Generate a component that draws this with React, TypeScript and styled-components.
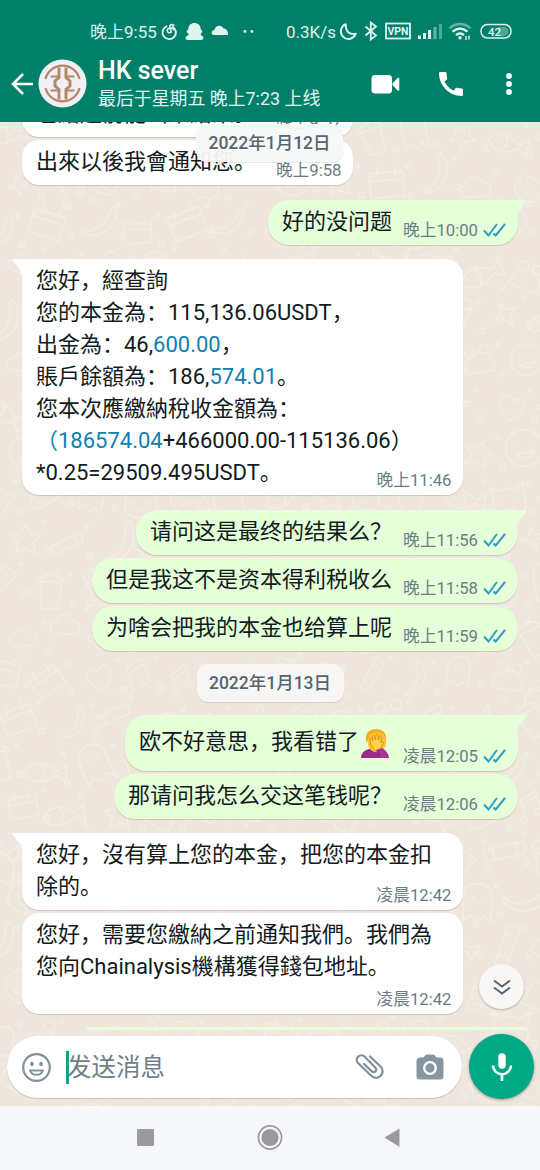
import React from 'react';
import styled, { createGlobalStyle } from 'styled-components';
import { MdCall } from 'react-icons/md';

const Global = createGlobalStyle`
  * { box-sizing: border-box; }
  body {
    margin: 0;
    font-family: Roboto, "Noto Sans CJK SC", sans-serif;
    background: #f6f7f9;
  }
  svg { display: block; flex: none; }
`;

const Screen = styled.div`
  width: 540px;
  height: 1170px;
  display: flex;
  flex-direction: column;
  overflow: hidden;
`;

const Header = styled.header`
  height: 122px;
  flex: none;
  background: #008069;
  color: #fff;
`;

const StatusBar = styled.div`
  height: 45px;
  padding: 17px 0 0 90px;
  display: flex;
  align-items: center;
  font-size: 17px;
  color: #dff3ef;
  white-space: nowrap;
`;

const StatusText = styled.span<{ $w: number }>`
  width: ${(p) => p.$w}px;
  line-height: 28px;
  padding-top: 1px;
`;

const AppBar = styled.div`
  height: 77px;
  padding-left: 10px;
  display: flex;
  align-items: center;
`;

const Titles = styled.div`
  width: 284px;
  padding: 3px 0 0 11px;
  white-space: nowrap;
`;

const Name = styled.div`
  font-size: 25px;
  font-weight: 500;
  line-height: 28px;
`;

const Seen = styled.div`
  font-size: 17.9px;
  line-height: 28px;
  color: #e0f3ef;
`;

const Chat = styled.main`
  position: relative;
  height: 984px;
  flex: none;
  overflow: hidden;
  background: #efe7de;
`;

const Backdrop = styled.svg`
  position: absolute;
  inset: 0;
`;

const List = styled.div`
  position: relative;
  height: 908px;
  overflow: hidden;
  display: flex;
  flex-direction: column;
  justify-content: flex-end;
  padding: 0 22px;
`;

const Bubble = styled.div<{ $out?: boolean; $w: number; $h: number; $top: number }>`
  position: relative;
  flex: none;
  width: ${(p) => p.$w}px;
  height: ${(p) => p.$h}px;
  margin-top: ${(p) => p.$top}px;
  padding: 6px ${(p) => (p.$out ? 12 : 11.5)}px 4px 14px;
  align-self: ${(p) => (p.$out ? 'flex-end' : 'flex-start')};
  background: ${(p) => (p.$out ? '#e5ffd9' : '#fff')};
  border-radius: ${(p) => (p.$out ? 21 : 17)}px;
  box-shadow: 0 1px 1px rgba(90, 70, 50, 0.22);
  display: flex;
  justify-content: space-between;
  align-items: flex-end;
`;

const Tail = styled.svg<{ $out?: boolean }>`
  position: absolute;
  top: 0;
  ${(p) => (p.$out ? 'right: -9px;' : 'left: -10px; transform: scaleX(-1);')}
`;

const Body = styled.div`
  align-self: flex-start;
  flex: none;
  font-size: 22px;
  line-height: 32px;
  color: #111b21;
  white-space: pre;
`;

const Line = styled.div`
  height: 32px;
  display: flex;
`;

const Link = styled.span`
  color: #0f80b0;
`;

const Stamp = styled.div<{ $float?: boolean }>`
  flex: none;
  display: flex;
  align-items: center;
  height: 20px;
  margin-left: ${(p) => (p.$float ? -100 : 0)}px;
  font-size: 16.7px;
  line-height: 20px;
  color: #6d7b82;
  white-space: nowrap;
`;

const Ticks = styled.svg`
  margin: 0 0 2px 5px;
`;

const DateChip = styled.div<{ $floating?: boolean }>`
  width: 147px;
  height: 38px;
  border-radius: 11px;
  background: ${(p) => (p.$floating ? 'rgba(247,248,248,.95)' : '#f7f6f4')};
  box-shadow: 0 1px 1px rgba(90, 70, 50, 0.15);
  color: #54656f;
  font-size: 17.5px;
  font-weight: 500;
  line-height: 39px;
  text-align: center;
  white-space: nowrap;
  ${(p) =>
    p.$floating
      ? 'position: absolute; top: 2px; left: 196px;'
      : 'flex: none; align-self: center; margin-top: 13px;'}
`;

const ScrollButton = styled.div`
  position: absolute;
  left: 479px;
  top: 842px;
  width: 45px;
  height: 45px;
  border-radius: 50%;
  background: #f9f7f6;
  box-shadow: 0 1px 2px rgba(60, 50, 40, 0.3);
  display: grid;
  place-items: center;
`;

const Composer = styled.div`
  position: relative;
  height: 76px;
  padding: 4px 6px 0 7px;
  display: flex;
  justify-content: space-between;
`;

const Field = styled.div`
  width: 455px;
  height: 62px;
  margin-top: 2px;
  padding: 0 17px 0 14px;
  border-radius: 31px;
  background: #fff;
  box-shadow: 0 1px 1px rgba(90, 70, 50, 0.25);
  display: flex;
  align-items: center;
`;

const Caret = styled.i`
  width: 3px;
  height: 33px;
  margin-left: 14px;
  background: #1aa088;
`;

const Placeholder = styled.span`
  flex: 1;
  margin-left: -2px;
  padding-top: 2px;
  font-size: 24.5px;
  line-height: 40px;
  color: #6f7e87;
`;

const Mic = styled.div`
  width: 65px;
  height: 65px;
  border-radius: 50%;
  background: #00a884;
  box-shadow: 0 1px 3px rgba(0, 0, 0, 0.35);
  display: grid;
  place-items: center;
`;

const NavBar = styled.nav`
  height: 64px;
  background: #f6f7f9;
`;

const PhoneSlot = styled.div`
  width: 32px;
  margin: 0 38px 0 35px;
`;

const CameraSlot = styled.div`
  margin-left: 29px;
`;

const NextEdge = styled.div`
  flex: none;
  width: 441px;
  height: 3px;
  margin: 13px -9px 0 0;
  align-self: flex-end;
  border-radius: 4px 2px 0 0;
  background: #e5ffd9;
`;

const EmojiText = styled.span`
  padding-top: 5px;
`;

const EmojiSlot = styled.span`
  margin: 7px 0 0 1px;
`;

/* ---------- wallpaper ---------- */

const doodles = [
  'M0-13l4 8 9 1-6 7 2 9-9-4-9 4 2-9-7-7 9-1z',
  'M-12 8c-9-1-8-12 0-12 1-10 15-10 17-2 9-1 11 13 2 14z',
  'M-16-10h30v22h-30zM-16-3h30M-9-15v8M7-15v8',
  'M-17 8C-6 12 8 2 10-14l5-2c4 16-10 33-30 28z',
  'M0-16a16 16 0 1 0 .1 0M-6-4v1M6-4v1M-8 4q8 9 16 0z',
  'M-8 12V-10L10-15V8M-8-4L10-9M-8 12a4 3 0 1 1-1-3M10 8a4 3 0 1 1-1-3',
  'M0 15C-24-2-9-18 0-6 9-18 24-2 0 15z',
  'M-16 10L8-15q8 1 8 8L-8 16zM-10 4l8 7M4-10l8 7',
  'M-10-8h20l-3 24H-7zM-13-8q13-14 26 0M0-13l6-8',
  'M-18 2Q-6-14 12 0L20-7v16L12 3Q-6 17-18 2M-10 0v1M-2-6q5 7 0 14',
  'M0-12l3 9 9 3-9 3-3 9-3-9-9-3 9-3z',
  'M-14-6l-3-10 9 5q7-3 15 0l9-5-2 12q6 18-14 18t-14-20M-6 0v1M6 0v1M-3 6q3 4 6 0',
  'M-15 14L-3-16 12-12 0 15zM-9 8l12 3M-3-10l9 3',
  'M-17 12q0-22 17-22t17 22zM-8-17a6 6 0 1 0 .1 0M8-18a5 5 0 1 0 .1 0',
  'M-12 16V-4Q-12-16 0-16t12 12v20l-6-5-6 5-6-5zM-4-5v2M4-5v2',
];

const rand = (n: number) => {
  const v = Math.sin(n * 127.1 + 31.7) * 43758.5453;
  return v - Math.floor(v);
};

const Wallpaper = () => {
  const items: React.ReactNode[] = [];
  let n = 0;
  for (let row = 0; row < 23; row++) {
    for (let col = 0; col < 13; col++) {
      n++;
      const x = col * 46 - 4 + (row % 2) * 20 + rand(n) * 12;
      const y = row * 45 + 8 + rand(n + 400) * 14;
      items.push(
        <path
          key={n}
          d={doodles[Math.floor(rand(n + 900) * doodles.length)]}
          transform={`translate(${x} ${y}) rotate(${rand(n + 50) * 70 - 35}) scale(${0.85 + rand(n + 70) * 0.35})`}
        />,
        <circle key={`a${n}`} cx={x + 23} cy={y + 12} r={2.6} />,
        <circle key={`b${n}`} cx={x + 19} cy={y - 17} r={1.8} />,
      );
    }
  }
  return (
    <Backdrop width="540" height="984" fill="none" stroke="#f4ede6" strokeWidth="1.5" strokeLinejoin="round" strokeLinecap="round">
      {items}
    </Backdrop>
  );
};

/* ---------- icons ---------- */

const StatusIcons = () => (
  <svg width="100" height="28" viewBox="160 17 100 28" fill="#dff3ef">
    <g fill="none" stroke="#dff3ef" strokeWidth="1.9" strokeLinecap="round">
      <path d="M166.5 26.3a6.7 6.7 0 1 0 6.2.4" />
      <path d="M173.8 25.2q-4-1.7-4 1.6l1.4 5.2a2.2 2.2 0 1 1-2.6-3.4q3.4-1.6 5.2 1.2" strokeWidth="1.6" />
    </g>
    <path d="M188.300 29.500c-.5-8.600 12.900-8.600 12.400 0 2.300.8 2 3.600-.2 4l1 2.200c2.800 0 2.200 4.300-.2 4.300h-13.500c-3 0-3-4.300 0-4.300l1-2.200c-2.500-.4-2.800-3.200-.5-4z" />
    <path d="M214.200 35c-3.600 0-3.300-4.600.3-5 1-4.800 7-5.600 9-1.500 3.200-.2 4.600 3 4.600 6.500z" />
    <rect x="243.500" y="30" width="2.800" height="2.800" rx="1" />
    <rect x="250.500" y="30" width="2.800" height="2.800" rx="1" />
  </svg>
);

const StatusRight = () => (
  <svg width="180" height="28" viewBox="336 17 180 28" fill="none" stroke="#dff3ef" strokeWidth="1.800">
    <path d="M346.500 24a7.600 7.600 0 1 0 10 9.500q-10 1.500-10-9.500z" strokeLinejoin="round" transform="translate(-.8 .3)" strokeWidth="2" />
    <path d="M365.500 26.500l10.500 9-5.200 4V22.500l5.200 4-10.500 9" />
    <rect x="386" y="23.500" width="24" height="15" />
    <text x="398" y="35" textAnchor="middle" fontSize="10.500" fontWeight="700" fill="#dff3ef" stroke="none" fontFamily="Roboto">VPN</text>
    <g stroke="none" fill="#dff3ef">
      <rect x="418" y="35.500" width="3" height="3.500" />
      <rect x="423" y="33" width="3" height="6" />
      <rect x="428" y="30" width="3" height="9" />
      <rect x="433.500" y="27" width="3" height="12" opacity=".45" />
      <rect x="439" y="24" width="3" height="15" opacity=".35" />
    </g>
    <path d="M449.500 28.200q10.500-8.200 21 0" opacity=".45" strokeWidth="2.400" />
    <path d="M452.500 31.700q7.500-6.500 15 0M456 35.200q4-3.600 8 0" strokeWidth="2.400" />
    <circle cx="460" cy="37.700" r="1.700" fill="#dff3ef" stroke="none" />
    <path d="M466 40v-4M469 35.500v4" strokeWidth="1.400" />
    <rect x="481" y="24.500" width="30" height="13.500" rx="6.500" strokeWidth="1.500" />
    <path d="M498 27h6a4.500 4.500 0 0 1 0 9h-6z" fill="#fff" opacity=".3" stroke="none" />
    <text x="494.500" y="35.500" textAnchor="middle" fontSize="11.500" fontWeight="500" fill="#dff3ef" stroke="none" fontFamily="Roboto">42</text>
  </svg>
);

const Avatar = () => (
  <svg width="49" height="49" viewBox="0 0 49 49">
    <circle cx="24.500" cy="24.500" r="24" fill="#f0eff3" />
    <g fill="none" stroke="#b48767" strokeWidth="2.200">
      <path d="M7.500 20A17.500 17.500 0 0 1 41.500 20M7.500 29A17.500 17.500 0 0 0 41.500 29" />
      <path d="M12.500 17.500h7.500M12.500 31.500h7.500M29 17.500h7.500M29 31.500h7.500" />
      <path d="M21 8.500v10l-4 3.500v5l4 3.500v10M28 8.500v10l4 3.500v5l-4 3.500v10" strokeWidth="2.900" />
    </g>
  </svg>
);

const Facepalm = () => (
  <svg width="30" height="31" viewBox="0 0 30 31">
    <path d="M1 30q0-7 8-9h13q6 2 7 9z" fill="#9b2a8c" />
    <path d="M6.500 11Q6 1 16 1q10 0 10 10v3q0 8-8 10-5 1-9-4z" fill="#fcc32c" />
    <path d="M6.200 14Q4 2 15.500 1 26 1 26 11q-2-5-5-6Q12 3 9 8z" fill="#f0ae22" />
    <path d="M11 17l-1-6q1-2 2 0l1 2-.5-5q1-1.500 2 0l1 4 .5-5q1-1.500 2 0l.2 5 1.500-4q1.500-1 1.600.6l-.6 6 2-1q1.500.6.5 2l-3.200 6.400-5 .8z" fill="#ffd04a" stroke="#cf8a1a" strokeWidth=".8" />
    <path d="M16 22l6-2 3 2 2 8h-8z" fill="#a8329a" />
    <path d="M18 22q1 4 1 8" stroke="#77206d" strokeWidth=".9" fill="none" />
  </svg>
);

const CheckPair = () => (
  <Ticks width="23" height="16" viewBox="0 0 23 16" fill="none" stroke="#2d9dcb" strokeWidth="2">
    <path d="M1 8.500l4.500 5L14 2M10.500 11.500l2.200 2L22 2" />
  </Ticks>
);

const TailShape = ({ out }: { out?: boolean }) => (
  <Tail $out={out} width="26" height="16" viewBox="0 0 26 16" fill={out ? '#e5ffd9' : '#fff'}>
    <path d="M0 0h24.500q2 0 .8 1.700L17 12v4L0 6z" />
  </Tail>
);

interface MsgProps {
  lines: React.ReactNode[];
  time: string;
  w: number;
  top: number;
  h?: number;
  out?: boolean;
  tail?: boolean;
}

const Message = ({ lines, time, w, top, h = 45, out, tail }: MsgProps) => (
  <Bubble $out={out} $w={w} $h={h} $top={top}>
    {tail && <TailShape out={out} />}
    <Body>
      {lines.map((l, i) => (
        <Line key={i}>{l}</Line>
      ))}
    </Body>
    <Stamp $float={lines.length > 1}>
      {time}
      {out && <CheckPair />}
    </Stamp>
  </Bubble>
);

export default function App() {
  return (
    <Screen>
      <Global />
      <Header>
        <StatusBar>
          <StatusText $w={70}>晚上9:55</StatusText>
          <StatusIcons />
          <StatusText $w={26} />
          <StatusText $w={50}>0.3K/s</StatusText>
          <StatusRight />
        </StatusBar>
        <AppBar>
          <svg width="28" height="28" viewBox="0 0 28 28" fill="none" stroke="#fff" strokeWidth="2.500">
            <path d="M23 14H3M13 4L3 14l10 10" />
          </svg>
          <Avatar />
          <Titles>
            <Name>HK sever</Name>
            <Seen>最后于星期五 晚上7:23 上线</Seen>
          </Titles>
          <svg width="29" height="20" viewBox="0 0 29 20" fill="#fff">
            <rect x="0.500" y="1" width="20.500" height="18.500" rx="3.500" />
            <path d="M21.500 9.500L26.500 4q1.800-1 1.800 1v10.500q0 2-1.800 1L21.500 11z" />
          </svg>
          <PhoneSlot>
            <MdCall size={32} />
          </PhoneSlot>
          <svg width="8" height="24" viewBox="0 0 8 24" fill="#fff">
            <circle cx="4" cy="4" r="2.900" />
            <circle cx="4" cy="12" r="2.900" />
            <circle cx="4" cy="20" r="2.900" />
          </svg>
        </AppBar>
      </Header>

      <Chat>
        <Wallpaper />
        <List>
          <Message w={331} top={0} time="晚上9:57" lines={['也結起前能出來結果。']} />
          <Message w={331} top={3} time="晚上9:58" lines={['出來以後我會通知您。']} />
          <Message out tail w={250} top={15} time="晚上10:00" lines={['好的没问题']} />
          <Message
            tail
            w={441}
            h={236}
            top={14}
            time="晚上11:46"
            lines={[
              '您好，經查詢',
              '您的本金為：115,136.06USDT，',
              <>出金為：46,<Link>600.00</Link>，</>,
              <>賬戶餘額為：186,<Link>574.01</Link>。</>,
              '您本次應繳納稅收金額為：',
              <><Link>（186574.04</Link>+466000.00-115136.06）</>,
              '*0.25=29509.495USDT。',
            ]}
          />
          <Message out tail w={382} top={15} time="晚上11:56" lines={['请问这是最终的结果么？']} />
          <Message out w={426} top={3} time="晚上11:58" lines={['但是我这不是资本得利税收么']} />
          <Message out w={426} top={3} time="晚上11:59" lines={['为啥会把我的本金也给算上呢']} />
          <DateChip>2022年1月13日</DateChip>
          <Message
            out
            tail
            w={393}
            h={56}
            top={13}
            time="凌晨12:05"
            lines={[
              <>
                <EmojiText>欧不好意思，我看错了</EmojiText>
                <EmojiSlot>
                  <Facepalm />
                </EmojiSlot>
              </>,
            ]}
          />
          <Message out w={404} top={3} time="凌晨12:06" lines={['那请问我怎么交这笔钱呢？']} />
          <Message tail w={441} h={77} top={14} time="凌晨12:42" lines={['您好，沒有算上您的本金，把您的本金扣', '除的。']} />
          <Message w={441} h={101} top={3} time="凌晨12:42" lines={['您好，需要您繳納之前通知我們。我們為', '您向Chainalysis機構獲得錢包地址。']} />
          <NextEdge />
        </List>
        <DateChip $floating>2022年1月12日</DateChip>
        <ScrollButton>
          <svg width="20" height="20" viewBox="0 0 20 20" fill="none" stroke="#54656f" strokeWidth="2">
            <path d="M2 3.500l8 6 8-6M2 10.500l8 6 8-6" />
          </svg>
        </ScrollButton>
        <Composer>
          <Field>
            <svg width="31" height="31" viewBox="0 0 31 31" fill="none" stroke="#7f919b" strokeWidth="2.200">
              <circle cx="15.500" cy="15.500" r="13.300" />
              <ellipse cx="11" cy="12" rx="1.800" ry="2.300" fill="#7f919b" stroke="none" />
              <ellipse cx="20" cy="12" rx="1.800" ry="2.300" fill="#7f919b" stroke="none" />
              <path d="M9 18.500h13q-1.500 4.300-6.500 4.300T9 18.500z" strokeWidth="2" strokeLinejoin="round" />
            </svg>
            <Caret />
            <Placeholder>发送消息</Placeholder>
            <svg width="32" height="30" viewBox="0 0 32 30" fill="none" stroke="#82929c" strokeWidth="2.300" strokeLinecap="round">
              <path d="M16 4.500l10.500 10a6.300 6.300 0 0 1-9 9.500L4 11a4.600 4.600 0 0 1 6.500-6.500l11 11.200a2.600 2.600 0 0 1-3.700 3.700L10 12" />
            </svg>
            <CameraSlot>
              <svg width="30" height="28" viewBox="0 0 30 28">
                <path d="M10 2.500Q10.600 1.500 12 1.500h6q1.400 0 2 1l1.600 2H25q3.500 0 3.500 3.500v15q0 3.500-3.500 3.500H5Q1.500 26.500 1.500 23V8Q1.500 4.500 5 4.500h3.400z" fill="#8596a0" />
                <circle cx="15" cy="15" r="5.800" fill="none" stroke="#fff" strokeWidth="2.300" />
              </svg>
            </CameraSlot>
          </Field>
          <Mic>
            <svg width="22" height="30" viewBox="0 0 22 30" fill="none" stroke="#fff">
              <path d="M11 5v8" strokeWidth="7.500" strokeLinecap="round" />
              <path d="M2 13.500a9 8.700 0 0 0 18 0M11 22v7" strokeWidth="2.600" />
            </svg>
          </Mic>
        </Composer>
      </Chat>

      <NavBar>
        <svg width="540" height="64" viewBox="0 1106 540 64" fill="#9a9a9c">
          <rect x="137" y="1129" width="17" height="17" rx="1" />
          <circle cx="270" cy="1137.500" r="11.600" fill="none" stroke="#9a9a9c" strokeWidth="1.700" />
          <circle cx="270" cy="1137.500" r="8.600" />
          <path d="M384.500 1137.500L399.500 1128.500V1147z" />
        </svg>
      </NavBar>
    </Screen>
  );
}
